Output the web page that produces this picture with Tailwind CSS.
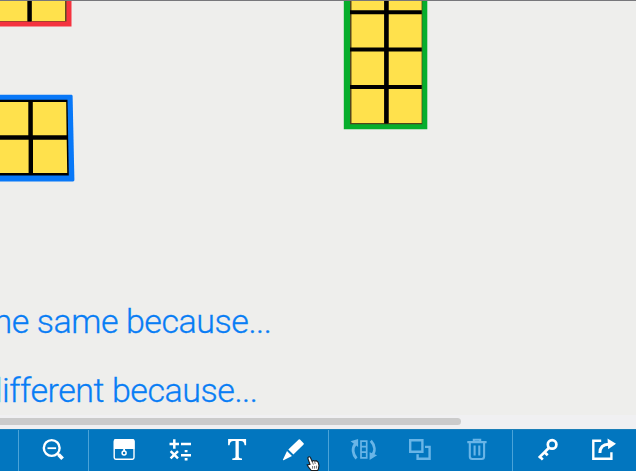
<!DOCTYPE html>
<html lang="en">
<head>
<meta charset="utf-8">
<title>Whiteboard</title>
<script src="https://cdn.jsdelivr.net/npm/@tailwindcss/browser@4"></script>
</head>
<body class="w-[636px] h-[471px] overflow-hidden flex flex-col bg-[#eeeeec] font-['Roboto',sans-serif]">
<main class="relative h-[415px] shrink-0 overflow-hidden">
  <svg class="absolute inset-0" width="636" height="200" viewBox="0 0 636 200">
    <!-- red frame -->
    <path d="M-5-5H71.5V26.5H-5z" fill="#f5333f"/>
    <path d="M-5-5H66.5V21.5H-5z" fill="#5c4d20"/>
    <path d="M-5-5H27.5V21H-5zM32-5H65V21H32z" fill="#ffe14c"/>
    <path d="M27.5-5H31.5V21.5H27.5z" fill="#000"/>
    <!-- blue frame -->
    <path d="M-5 94.8H71.5Q72.5 94.8 72.6 96L74.4 180Q74.4 181.4 73 181.4H-5z" fill="#0878f8"/>
    <path d="M-5 99.7H67.5L68.8 175.4H-5z" fill="#000"/>
    <path d="M-5 102H28.3V135.3H-5zM32.8 102H66.2L66.6 135.3H32.8zM-5 139.7H28.6V173H-5zM33 139.7H66.7L67.2 173H33z" fill="#ffe14c"/>
    <!-- green frame -->
    <path d="M343.8-5H427.3V129.3H343.8z" fill="#06ae2c"/>
    <path d="M350-5H422.3V124.2H350z" fill="#51451d"/>
    <path d="M351.5-5H384.2V123H351.5zM388.8-5H421.6V123H388.8z" fill="#ffe14c"/>
    <path d="M384.2-5H388.4V123.5H384.2zM350 10.3H421.8V14.3H350zM350 47.4H421.8V51.6H350zM350 85H421.8V89H350z" fill="#000"/>
    <path d="M0 0H636V1H0z" fill="#77777b"/>
  </svg>
  <div class="flex flex-col items-start pt-[297px] text-[34px] leading-[48px] font-light tracking-[-0.45px] text-[#087df5] [-webkit-text-stroke:0.3px_#087df5] whitespace-nowrap">
    <div class="w-[271.5px] flex justify-end overflow-hidden"><p>the same because...</p></div>
    <div class="w-[257.5px] flex justify-end overflow-hidden mt-[21px]"><p>different because...</p></div>
  </div>
</main>
<div class="h-[14px] shrink-0 bg-[#f0f0f2] pt-[3px]"><div class="w-[461px] h-[7px] rounded-r-full bg-[#cbcbcb]"></div></div>
<nav class="relative h-[42px] shrink-0 flex bg-[#0276bf] text-white border-t border-[#1b7fb9]">
  <div class="w-[19px] border-r border-[#4aa3d8]"></div>
  <div class="w-[70px] border-r border-[#4aa3d8] flex justify-center">
    <svg class="w-8 h-8 mt-1" viewBox="0 0 32 32" fill="none" stroke="currentColor"><circle cx="13.7" cy="14" r="7.9" stroke-width="2.4"/><path d="M9.5 14.2H18.1" stroke-width="1.8"/><path d="M19.2 19.3L21 21" stroke-width="2"/><path d="M20.5 20.5L24.6 24.7" stroke-width="3.7"/></svg>
  </div>
  <div class="w-[240px] border-r border-[#4aa3d8] grid grid-cols-4 px-[7px]">
    <button class="flex justify-center pt-1"><svg class="w-8 h-8" viewBox="0 0 32 32" fill="none" stroke="currentColor"><rect x="6.2" y="5.8" width="19.8" height="19.4" rx="1.6" stroke-width="1.4"/><path d="M6 7Q6 5 8 5H24.5Q26.5 5 26.5 7V15H6z" fill="currentColor" stroke="none"/><path d="M16.1 14V17" stroke-width="1.8"/><circle cx="16.1" cy="19" r="2" stroke-width="1.5"/></svg></button>
    <button class="flex justify-center pt-1"><svg class="w-8 h-8" viewBox="0 0 32 32" fill="none" stroke="currentColor" stroke-width="2.5"><path d="M5.5 10H15M10.3 5.2V14.7M17 9.9H27M17 21.2H27M6.6 17.2L14 24.4M14 17.2L6.6 24.4"/><path d="M20.7 15.9H23.5V18.3H20.7zM20.7 24H23.5V26.4H20.7z" fill="currentColor" stroke="none"/></svg></button>
    <button class="flex justify-center pt-1"><svg class="w-8 h-8" viewBox="0 0 32 32"><path fill="currentColor" d="M7.1 5.1H25.1V11.2H23.6C23.2 8.3 22.2 7 19.8 7H17.8V22.5C17.8 24 18.8 24.4 21 24.5V26H11.3V24.5C13.5 24.4 14.5 24 14.5 22.5V7H12.4C10 7 9 8.3 8.6 11.2H7.1z"/></svg></button>
    <button class="flex justify-center pt-1"><svg class="w-8 h-8" viewBox="0 0 32 32" fill="currentColor"><path d="M21.7 5.6Q22.4 5 23 5.6L26.6 9.2Q27.2 9.8 26.6 10.4L16.4 20.6L11.3 15.6zM10 17L15 22L6.5 26.2Q5.6 26.4 6 25.5z"/></svg></button>
  </div>
  <div class="w-[184px] border-r border-[#4aa3d8] grid grid-cols-3 px-[7px] text-[#69b5e7]">
    <button class="flex justify-center pt-1"><svg class="w-8 h-8" viewBox="0 0 32 32" fill="none" stroke="currentColor"><path d="M13 7.2H18.7V23.9H13zM13 12.7H18.7M13 18.2H18.7" stroke-width="1.7"/><path d="M8.5 24.5C4.6 20.3 3.7 14.3 7.7 9.5M22.8 6.8C27.1 11.5 27.6 17.3 23.8 22" stroke-width="2.8"/><path d="M2.6 7.3L10.1 5V13zM21.6 18.2V25.9L29.1 21.3z" fill="currentColor" stroke="none"/></svg></button>
    <button class="flex justify-center pt-1"><svg class="w-8 h-8" viewBox="0 0 32 32" fill="none" stroke="currentColor" stroke-width="2.4"><path d="M6.2 6.2H18.4V17.8H6.2zM21 12.9H25.6V24.8H13.6V20.2"/></svg></button>
    <button class="flex justify-center pt-1"><svg class="w-8 h-8" viewBox="0 0 32 32" fill="none" stroke="currentColor" stroke-width="2.1"><path d="M6.3 8.1H25.6M12.8 7V5.7H19.2V7M8.8 9V22.5Q8.8 25 11.3 25H20.6Q23.1 25 23.1 22.5V9M13.6 11.6V21.5M18.3 11.6V21.5"/></svg></button>
  </div>
  <div class="w-[123px] flex shrink-0 pl-[7px]">
    <button class="w-[56px] flex justify-center pt-1"><svg class="w-8 h-8" viewBox="0 0 32 32" fill="none" stroke="currentColor" stroke-width="2.7"><circle cx="20.1" cy="10.4" r="4.3"/><path d="M17 13.7L6.8 23.9M12.6 18.3L15.7 21.3M7.8 22.6L10.8 25.6"/></svg></button>
    <button class="w-[56px] flex justify-center pt-1"><svg class="w-8 h-8" viewBox="0 0 32 32" fill="none" stroke="currentColor" stroke-width="2.4"><path d="M13.2 6.7H5.3V24.7H23.4V18.2"/><path d="M11.9 19C12 13.6 14.6 10.4 20.6 10.3" stroke-width="3"/><path d="M19.5 4.5L28 9.7L20.2 15.3z" fill="currentColor" stroke="none"/></svg></button>
  </div>
  <svg class="absolute left-[305px] top-[26px] w-[16px] h-[16px]" viewBox="0 0 16 16"><path d="M3 1.4Q4.5.1 5.5 1.7L7.2 5.5L8.4 4.6L10 5.1L11.3 4.7L13.2 6.2L14 9.5L13.4 13L12.6 14.5H6.3L3.5 11.2L2.2 8.9L5 8.3L3 3z" fill="#fff" stroke="#171b1e" stroke-width="1.1"/><path d="M7.2 5.5L8.4 8.6M9.6 5.6L10.3 8M7.6 10V12.7M9.6 10V12.7M11.6 9.7V12.5" stroke="#333" stroke-width=".7"/></svg>
</nav>
</body>
</html>
